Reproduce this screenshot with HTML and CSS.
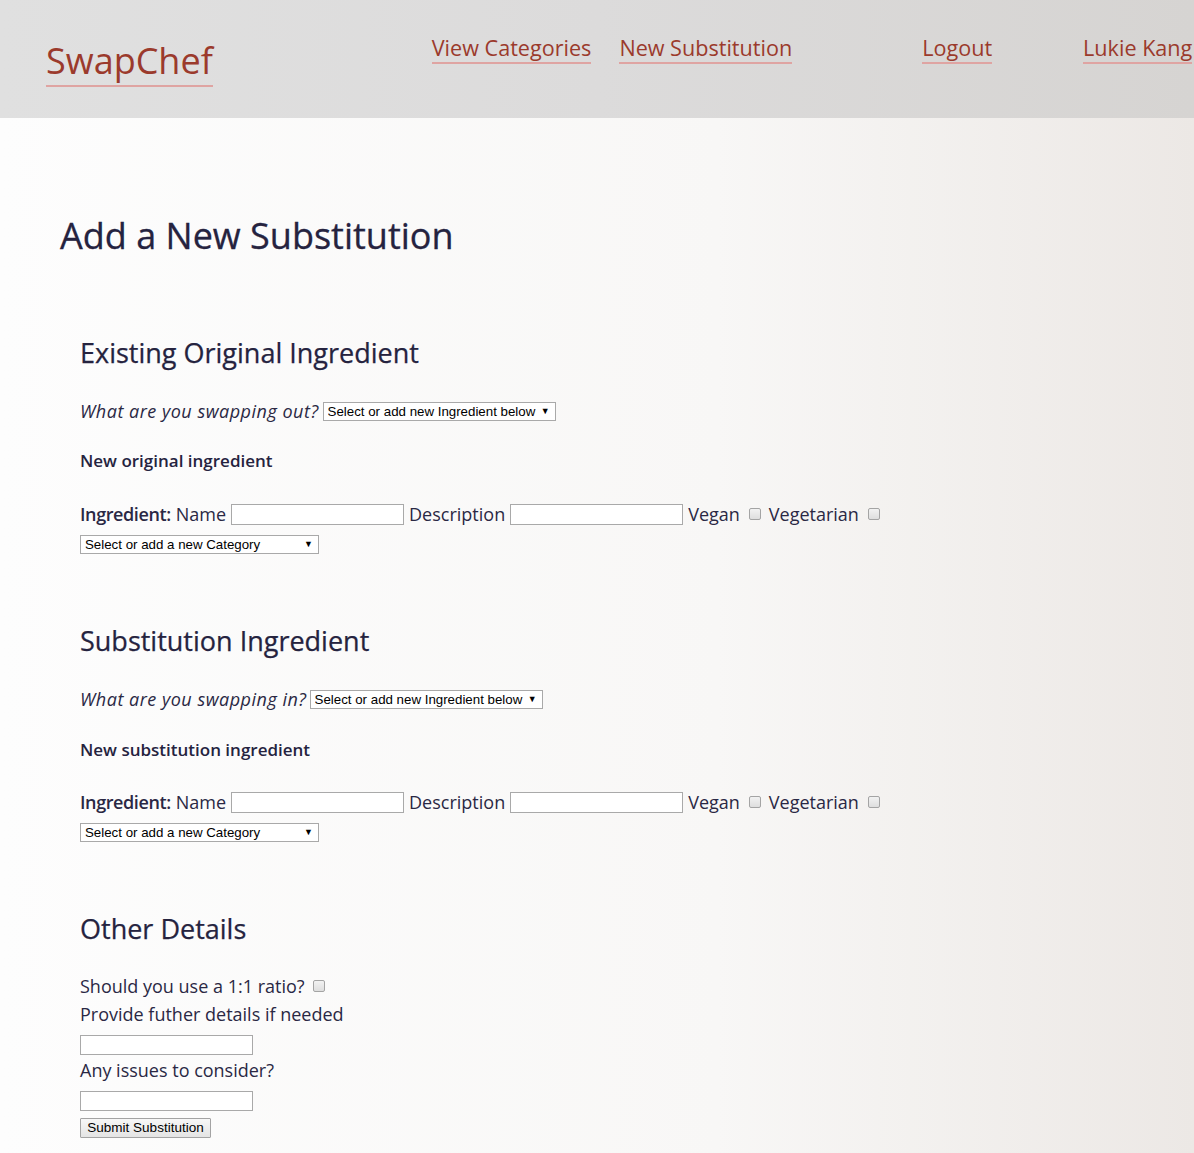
FILE: index.html
```html
<!DOCTYPE html>
<html>
<head>
<meta charset="utf-8">
<link rel="stylesheet" href="styles.css">
</head>
<body>
<header class="topbar">
  <a class="logo" href="#">SwapChef</a>
  <nav class="nav">
    <a class="nav-link cat" href="#">View Categories</a>
    <a class="nav-link new" href="#">New Substitution</a>
    <a class="nav-link logout" href="#">Logout</a>
    <a class="nav-link user" href="#">Lukie Kang</a>
  </nav>
</header>
<main class="content">
  <h1 class="title">Add a New Substitution</h1>
  <form class="form">
    <section class="section first">
      <h2 class="sec-title">Existing Original Ingredient</h2>
      <div class="ask"><span class="ask-label">What are you swapping out?</span><span class="sel-wrap sel-ing"><select class="sel"><option>Select or add new Ingredient below</option></select><span class="sel-arrow">▼</span></span></div>
      <h3 class="sub-title">New original ingredient</h3>
      <div class="ing-row"><strong class="ing-strong">Ingredient:</strong><span>Name</span><input class="txt" type="text"><span>Description</span><input class="txt" type="text"><span>Vegan</span><input class="chk" type="checkbox"><span>Vegetarian</span><input class="chk" type="checkbox"></div>
      <div class="cat-row"><span class="sel-wrap sel-cat"><select class="sel"><option>Select or add a new Category</option></select><span class="sel-arrow">▼</span></span></div>
    </section>
    <section class="section second">
      <h2 class="sec-title">Substitution Ingredient</h2>
      <div class="ask"><span class="ask-label in">What are you swapping in?</span><span class="sel-wrap sel-ing"><select class="sel"><option>Select or add new Ingredient below</option></select><span class="sel-arrow">▼</span></span></div>
      <h3 class="sub-title">New substitution ingredient</h3>
      <div class="ing-row"><strong class="ing-strong">Ingredient:</strong><span>Name</span><input class="txt" type="text"><span>Description</span><input class="txt" type="text"><span>Vegan</span><input class="chk" type="checkbox"><span>Vegetarian</span><input class="chk" type="checkbox"></div>
      <div class="cat-row"><span class="sel-wrap sel-cat"><select class="sel"><option>Select or add a new Category</option></select><span class="sel-arrow">▼</span></span></div>
    </section>
    <section class="section third">
      <h2 class="sec-title">Other Details</h2>
      <div class="line ratio">Should you use a 1:1 ratio? <input class="chk" type="checkbox"></div>
      <div class="line">Provide futher details if needed</div>
      <div class="field"><input class="txt" type="text"></div>
      <div class="line issues">Any issues to consider?</div>
      <div class="field"><input class="txt" type="text"></div>
      <div class="field btn-field"><button class="btn" type="button">Submit Substitution</button></div>
    </section>
  </form>
</main>
</body>
</html>
```
FILE: styles.css
```css
html, body {
  margin: 0;
  padding: 0;
}
body {
  font-family: "Open Sans", "Liberation Sans", sans-serif;
  color: #2a2844;
  background: linear-gradient(to right, #fdfdfd 0%, #f8f7f6 60%, #ece8e5 100%);
  min-height: 1153px;
  overflow: hidden;
}
.topbar {
  height: 118px;
  background: linear-gradient(to right, #e0e0e0 0%, #dcdbdb 50%, #d6d4d2 100%);
  display: flex;
  align-items: flex-start;
  white-space: nowrap;
}
.logo {
  margin: 37px 0 0 46px;
  font-size: 36px;
  line-height: 48px;
  color: #9b3a2c;
  text-decoration: none;
  border-bottom: 2px solid #dfa4a2;
}
.nav {
  display: flex;
  margin: 33px 0 0 0;
}
.nav-link {
  font-size: 21.6px;
  line-height: 29px;
  color: #9b3a2c;
  text-decoration: none;
  border-bottom: 2px solid #dfa4a2;
}
.cat { margin-left: 219px; }
.new { margin-left: 28px; }
.logout { margin-left: 130px; }
.user { margin-left: 91px; }
.content {
  padding: 0 0 0 60px;
}
.title {
  margin: 93px 0 0 0;
  font-size: 36px;
  line-height: 50px;
  font-weight: 500;
  color: #25233f;
  -webkit-text-stroke: 0.3px #25233f;
}
.form {
  margin-left: 20px;
}
.sec-title {
  font-size: 27px;
  line-height: 38px;
  font-weight: 500;
  color: #25233f;
  margin: 0;
  -webkit-text-stroke: 0.25px #25233f;
}
.first .sec-title { margin-top: 73px; }
.second .sec-title { margin-top: 71px; }
.third .sec-title { margin-top: 71px; }
.ask {
  margin-top: 26px;
  font-size: 18px;
  line-height: 26px;
  display: flex;
  align-items: center;
}
.second .ask { margin-top: 26px; }
.ask-label {
  font-style: italic;
  letter-spacing: 0.5px;
  margin-right: 4px;
}
.ask-label.in { margin-right: 3px; }
.sel-wrap {
  position: relative;
  display: inline-block;
  height: 19px;
}
.sel {
  -webkit-appearance: none;
  appearance: none;
  font-family: Arial, "Liberation Sans", sans-serif;
  font-size: 13.3px;
  height: 19px;
  width: 100%;
  border: 1px solid #a9a9a9;
  background: #fff;
  color: #000;
  padding: 0 0 0 4px;
  margin: 0;
  border-radius: 0;
  display: block;
}
.sel-arrow {
  position: absolute;
  right: 6px;
  top: 3px;
  font-size: 9px;
  line-height: 12px;
  color: #000;
  pointer-events: none;
}
.sel-ing { width: 233px; }
.sel-cat { width: 239px; }
.sub-title {
  margin: 25px 0 0 0;
  font-size: 17px;
  line-height: 24px;
  font-weight: 600;
  color: #25233f;
}
.second .sub-title { margin-top: 26px; }
.ing-row {
  margin-top: 30px;
  font-size: 18px;
  line-height: 22px;
  white-space: nowrap;
  display: flex;
  align-items: center;
  gap: 5px;
}
.second .ing-row { margin-top: 29px; }
.ing-strong {
  font-weight: 600;
  letter-spacing: -0.4px;
}
.txt {
  width: 173px;
  height: 21px;
  box-sizing: border-box;
  border: 1px solid #a9a9a9;
  background: #fff;
  padding: 0 2px;
  margin: 0;
}
.chk {
  -webkit-appearance: none;
  appearance: none;
  width: 12px;
  height: 12px;
  box-sizing: border-box;
  border: 1px solid #a4a4a4;
  border-radius: 2px;
  background: linear-gradient(#f2f2f2, #dedede);
  margin: 0 3px 0 4px;
}
.cat-row {
  margin-top: 7px;
  height: 19px;
}
.line {
  font-size: 18px;
  line-height: 28px;
  display: flex;
  align-items: center;
}
.line .chk { margin-left: 8px; }
.ratio { margin-top: 24px; }
.field {
  margin-top: 4px;
  height: 20px;
}
.field .txt { height: 20px; }
.issues { margin-top: 4px; }
.btn-field { margin-top: 7px; }
.btn {
  font-family: Arial, "Liberation Sans", sans-serif;
  font-size: 13.5px;
  height: 20px;
  line-height: 16px;
  width: 131px;
  padding: 0;
  border: 1px solid #a3a3a3;
  border-radius: 1px;
  background: linear-gradient(#f7f7f7, #e4e4e4);
  color: #000;
  margin: 0;
}
```
